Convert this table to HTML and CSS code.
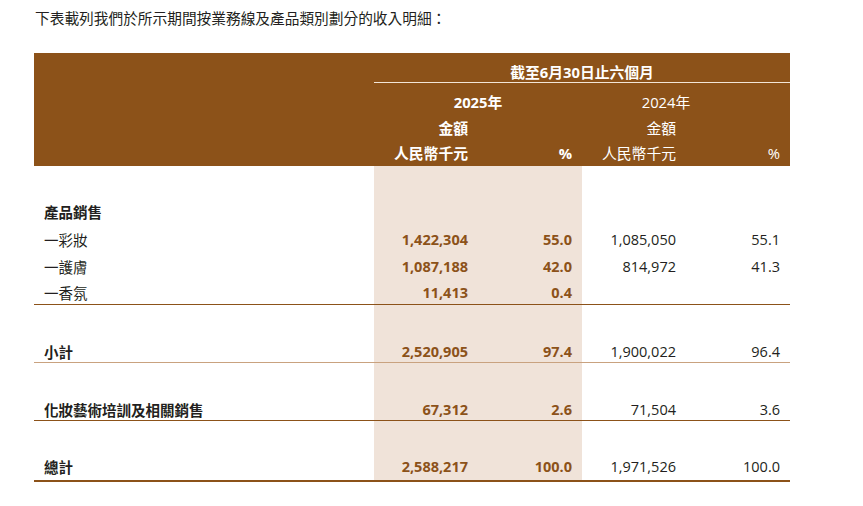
FILE: index.html
```html
<!DOCTYPE html>
<html lang="zh-Hant">
<head>
<meta charset="utf-8">
<link rel="stylesheet" href="styles.css">
</head>
<body>
<div class="page">
  <p class="intro">下表載列我們於所示期間按業務線及產品類別劃分的收入明細：</p>
  <table class="rev">
    <colgroup>
      <col class="c-label"><col class="c-num"><col class="c-num"><col class="c-num"><col class="c-num">
    </colgroup>
    <thead>
      <tr class="h1">
        <th class="blank"></th>
        <th colspan="4" class="period b">截至6月30日止六個月</th>
      </tr>
      <tr class="h2">
        <th class="blank"></th>
        <th colspan="2" class="yr b">2025年</th>
        <th colspan="2" class="yr yr24">2024年</th>
      </tr>
      <tr class="h3">
        <th class="blank"></th>
        <th class="r b">金額</th><th></th>
        <th class="r">金額</th><th></th>
      </tr>
      <tr class="h4">
        <th class="blank"></th>
        <th class="r b">人民幣千元</th><th class="r b">%</th>
        <th class="r">人民幣千元</th><th class="r">%</th>
      </tr>
    </thead>
    <tbody>
      <tr class="first">
        <td class="lbl b">產品銷售</td><td class="cur"></td><td class="cur"></td><td></td><td></td>
      </tr>
      <tr class="item i1">
        <td class="lbl">一彩妝</td><td class="cur">1,422,304</td><td class="cur">55.0</td><td>1,085,050</td><td>55.1</td>
      </tr>
      <tr class="item">
        <td class="lbl">一護膚</td><td class="cur">1,087,188</td><td class="cur">42.0</td><td>814,972</td><td>41.3</td>
      </tr>
      <tr class="item last">
        <td class="lbl">一香氛</td><td class="cur">11,413</td><td class="cur">0.4</td><td></td><td></td>
      </tr>
      <tr class="sum light">
        <td class="lbl b">小計</td><td class="cur">2,520,905</td><td class="cur">97.4</td><td>1,900,022</td><td>96.4</td>
      </tr>
      <tr class="sum">
        <td class="lbl b">化妝藝術培訓及相關銷售</td><td class="cur">67,312</td><td class="cur">2.6</td><td>71,504</td><td>3.6</td>
      </tr>
      <tr class="sum total">
        <td class="lbl b">總計</td><td class="cur">2,588,217</td><td class="cur">100.0</td><td>1,971,526</td><td>100.0</td>
      </tr>
    </tbody>
  </table>
</div>
</body>
</html>
```
FILE: styles.css
```css
html, body {
  margin: 0;
  padding: 0;
  background: #ffffff;
}
.page {
  padding: 8px 0 0 34px;
  font-family: "Noto Sans CJK TC", "Noto Sans", sans-serif;
  color: #231f20;
}
.intro {
  margin: 0 0 25px 1px;
  font-size: 14.7px;
  line-height: 20px;
  color: #231f20;
}
.rev {
  width: 756px;
  border-collapse: collapse;
  table-layout: fixed;
  font-size: 14.5px;
  font-family: "Open Sans", "Noto Sans CJK TC", sans-serif;
}
.c-label { width: 340px; }
.c-num { width: 104px; }

.rev th {
  background: #8c5219;
  color: #ffffff;
  font-weight: normal;
  font-size: 14.8px;
  line-height: 20px;
  padding: 0 10px;
}
.rev th.b, .rev td.b { font-weight: bold; }
.rev th.r { text-align: right; }
.rev th.blank { padding: 0; }

.h1 th { padding-top: 9px; padding-bottom: 0; }
.h1 th.period {
  text-align: center;
  border-bottom: 1px solid #f3e5d6;
}
.h2 th { padding-top: 9px; padding-bottom: 0; }
.h2 th.yr { text-align: center; }
.h2 th.yr24 { padding-right: 50px; }
.h3 th { padding-top: 6px; padding-bottom: 0; }
.h4 th { padding-top: 5px; padding-bottom: 3px; }

.rev td {
  line-height: 20px;
  padding: 0 10px;
  text-align: right;
  white-space: nowrap;
  color: #231f20;
}
.rev td.lbl {
  text-align: left;
  font-family: "Noto Sans CJK TC", "Noto Sans", sans-serif;
  color: #231f20;
}
.rev td.cur {
  background: #f0e3d9;
  color: #8c5219;
  font-weight: bold;
}
.first td { padding-top: 36px; }
.item td { padding-top: 6.5px; }
.item.i1 td { padding-top: 8px; }
.item.last td {
  padding-bottom: 1px;
  border-bottom: 1px solid #8c5219;
}
.sum td {
  padding-top: 37px;
  border-bottom: 1px solid #8c5219;
}
.sum.light td { border-bottom-color: #c9a27f; }
.sum.total td {
  padding-top: 36px;
  padding-bottom: 3px;
  border-bottom: 2px solid #8c5219;
}
```
